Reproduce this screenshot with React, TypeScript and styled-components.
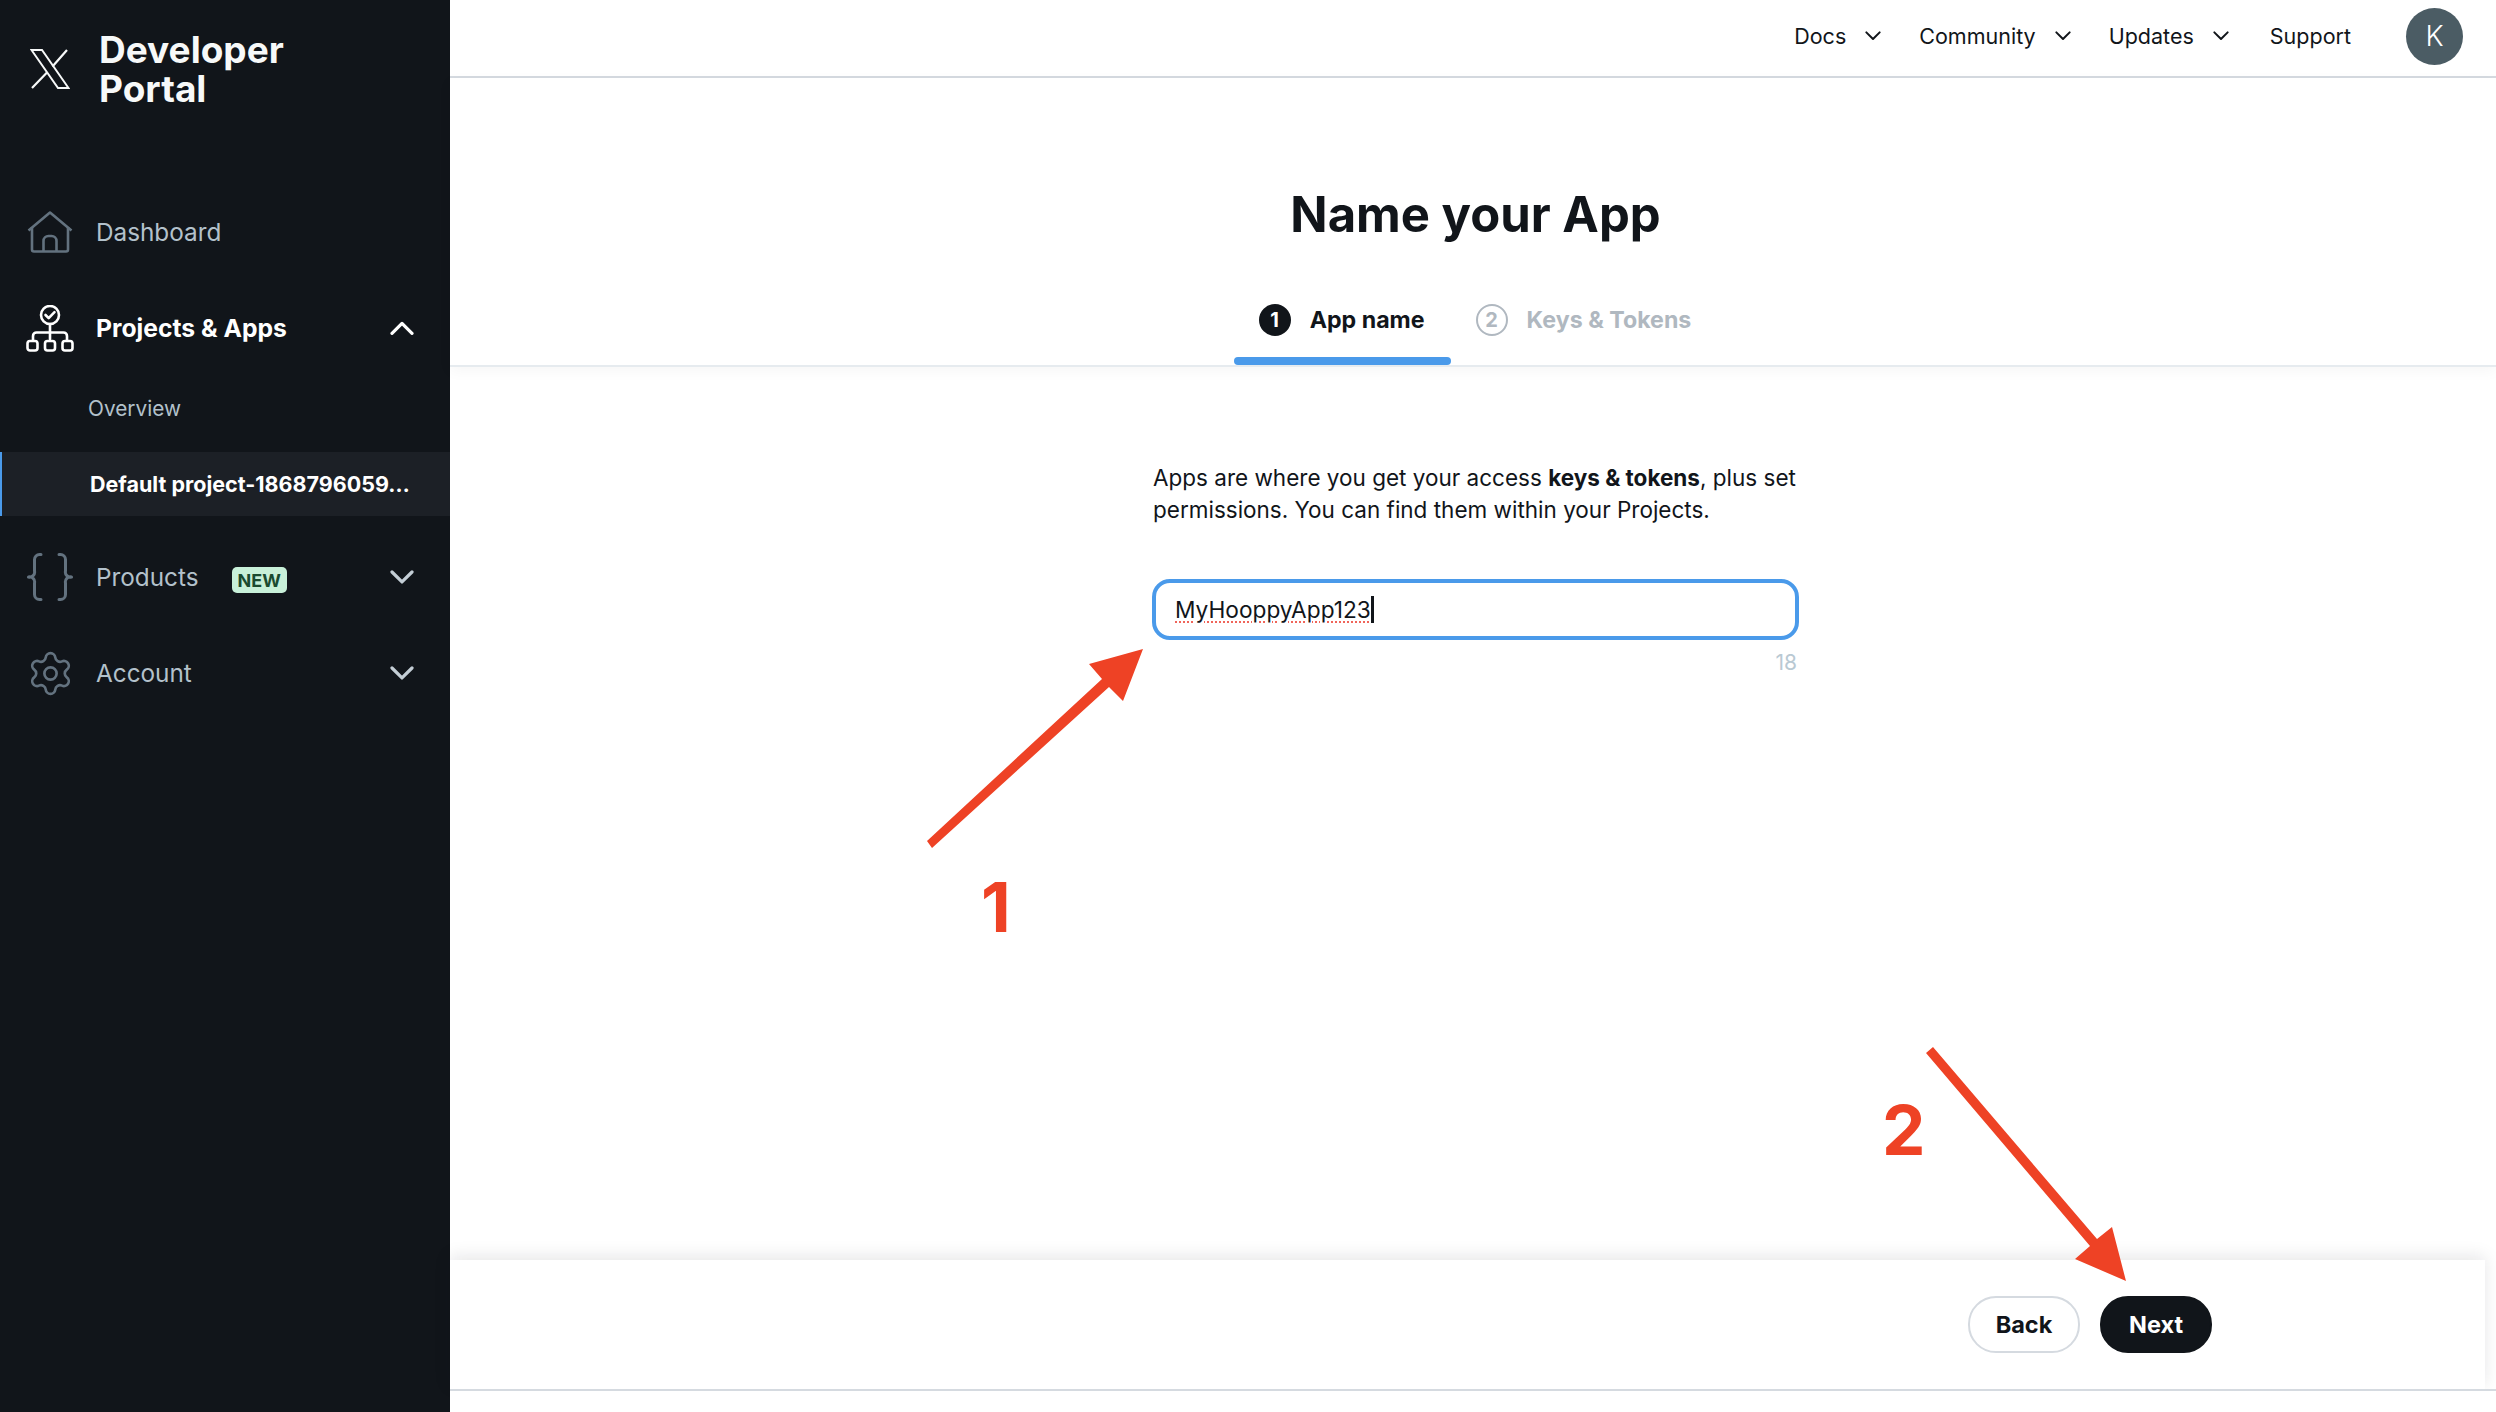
import { Settings } from "lucide-react";
import styled, { createGlobalStyle } from "styled-components";

const GlobalStyle = createGlobalStyle`
  html, body {
    margin: 0;
    padding: 0;
    background: #ffffff;
    overflow: hidden;
  }
  * {
    box-sizing: border-box;
  }
`;

const XLogo = () => (
  <svg width="40" height="40" viewBox="0 0 40 40" fill="none" stroke="#f7f9f9" strokeWidth="2">
    <path d="M1.500 1h10.500l26.500 38H28z" />
    <path d="M37 1L22.500 17.500M17 23.500L2 39" strokeWidth="2.200" />
  </svg>
);

const HomeIcon = () => (
  <svg width="46" height="42" viewBox="0 0 46 42" fill="none" stroke="#63727f" strokeWidth="2.600" strokeLinejoin="round">
    <path d="M1.500 19.500L23 1.500l21.500 18" />
    <path d="M5 16v22.500a2 2 0 0 0 2 2h32a2 2 0 0 0 2-2V16" />
    <path d="M16.500 40.500V30a5 5 0 0 1 5-5h3a5 5 0 0 1 5 5v10.500" />
  </svg>
);

const ProjectsIcon = () => (
  <svg width="48" height="47" viewBox="0 0 48 47" fill="none" stroke="#ffffff" strokeWidth="2.600" strokeLinejoin="round" strokeLinecap="round">
    <circle cx="24" cy="10" r="9" />
    <path d="M19.500 10l3.200 3.200 5.800-6" />
    <path d="M24 19v15" />
    <path d="M7 35v-4a3.500 3.500 0 0 1 3.500-3.500h27A3.500 3.500 0 0 1 41 31v4" />
    <rect x="1.500" y="36" width="10" height="9.500" rx="2.500" />
    <rect x="19" y="36" width="10" height="9.500" rx="2.500" />
    <rect x="36.500" y="36" width="10" height="9.500" rx="2.500" />
  </svg>
);

const BracesIcon = () => (
  <svg width="46" height="48" viewBox="0 0 46 48" fill="none" stroke="#63727f" strokeWidth="3" strokeLinecap="round" strokeLinejoin="round">
    <path d="M14 1.500H12.500a5 5 0 0 0-5 5v11.500a5 5 0 0 1-6 6 5 5 0 0 1 6 6v11.500a5 5 0 0 0 5 5H14" />
    <path d="M32 1.500h1.500a5 5 0 0 1 5 5v11.500a5 5 0 0 0 6 6 5 5 0 0 0-6 6v11.500a5 5 0 0 1-5 5H32" />
  </svg>
);

const Chevron = ({ up, size = 24, weight = 3.2, color = "#c4ced6" }: any) => (
  <svg width={size} height={size * 0.6} viewBox="0 0 24 14.4" fill="none" stroke={color} strokeWidth={weight} strokeLinecap="round" strokeLinejoin="round">
    <path d={up ? "M2 12.400l10-10 10 10" : "M2 2l10 10 10-10"} />
  </svg>
);

const App = () => {
  return (
    <Page>
      <GlobalStyle />
      <Sidebar>
        <Brand>
          <XLogo />
          <BrandName>
            Developer
            <br />
            Portal
          </BrandName>
        </Brand>
        <nav>
          <NavRow>
            <IconSlot>
              <HomeIcon />
            </IconSlot>
            <NavLabel>Dashboard</NavLabel>
          </NavRow>
          <NavRow>
            <IconSlot>
              <ProjectsIcon />
            </IconSlot>
            <NavLabel $active>Projects &amp; Apps</NavLabel>
            <NavChevron>
              <Chevron up color="#ffffff" />
            </NavChevron>
          </NavRow>
          <SubItem>Overview</SubItem>
          <ActiveSubItem>Default project-1868796059…</ActiveSubItem>
          <NavRow>
            <IconSlot>
              <BracesIcon />
            </IconSlot>
            <NavLabel>Products</NavLabel>
            <NewBadge>NEW</NewBadge>
            <NavChevron>
              <Chevron />
            </NavChevron>
          </NavRow>
          <NavRow>
            <IconSlot>
              <Settings size={49} color="#63727f" strokeWidth={1.3} />
            </IconSlot>
            <NavLabel>Account</NavLabel>
            <NavChevron>
              <Chevron />
            </NavChevron>
          </NavRow>
        </nav>
      </Sidebar>

      <Main>
        <TopBar>
          <TopLink>
            Docs
            <Chevron size={16} weight={3} color="#11151a" />
          </TopLink>
          <TopLink>
            Community
            <Chevron size={16} weight={3} color="#11151a" />
          </TopLink>
          <TopLink>
            Updates
            <Chevron size={16} weight={3} color="#11151a" />
          </TopLink>
          <SupportLink>Support</SupportLink>
          <Avatar>K</Avatar>
        </TopBar>

        <StepHeader>
          <Title>Name your App</Title>
          <Steps>
            <Step $active>
              <StepNumber $active>1</StepNumber>
              App name
            </Step>
            <Step>
              <StepNumber>2</StepNumber>
              Keys &amp; Tokens
            </Step>
          </Steps>
        </StepHeader>

        <Body>
          <Form>
            <Intro>
              Apps are where you get your access <strong>keys &amp; tokens</strong>, plus set permissions. You can find
              them within your Projects.
            </Intro>
            <NameField>
              <NameText>MyHooppyApp123</NameText>
              <Caret />
            </NameField>
            <Counter>18</Counter>
          </Form>
        </Body>

        <Footer>
          <BackButton>Back</BackButton>
          <NextButton>Next</NextButton>
        </Footer>
        <BottomStrip />
      </Main>

      <ArrowLayer viewBox="0 0 2496 1412">
        <polygon points="927,841 1102,679 1089,664 1143,649 1123,701 1109,687 932,848" fill="#ee4225" />
        <polygon points="1926,1053 1933,1047 2097,1239 2112,1227 2126,1281 2075,1259 2090,1246" fill="#ee4225" />
      </ArrowLayer>
      <MarkerOne>1</MarkerOne>
      <MarkerTwo>2</MarkerTwo>
    </Page>
  );
};

const Page = styled.div`
  position: relative;
  display: flex;
  width: 100%;
  height: 100vh;
  min-height: 1412px;
  font-family: Inter, "Liberation Sans", sans-serif;
  color: #11151a;
`;

const Sidebar = styled.aside`
  display: flex;
  flex-direction: column;
  width: 450px;
  flex-shrink: 0;
  background: #11151a;
`;

const Brand = styled.div`
  display: flex;
  align-items: center;
  gap: 30px;
  height: 184px;
  padding: 0 0 46px 30px;
`;

const BrandName = styled.div`
  margin-left: -1px;
  font-size: 37px;
  line-height: 39px;
  font-weight: 700;
  color: #f7f9f9;
`;

const NavRow = styled.div`
  display: flex;
  align-items: center;
  height: 96px;
  padding: 0 36px 0 25px;
`;

const IconSlot = styled.div`
  display: flex;
  align-items: center;
  justify-content: center;
  width: 50px;
  margin-right: 21px;
`;

const NavLabel = styled.span<{ $active?: boolean }>`
  font-size: ${(p) => (p.$active ? 24.7 : 24.3)}px;
  font-weight: ${(p) => (p.$active ? 700 : 400)};
  color: ${(p) => (p.$active ? "#ffffff" : "#b3c1cb")};
`;

const NavChevron = styled.div`
  display: flex;
  margin-left: auto;
`;

const SubItem = styled.div`
  display: flex;
  align-items: center;
  height: 64px;
  padding-left: 88px;
  font-size: 20.8px;
  color: #b3c1cb;
`;

const ActiveSubItem = styled.div`
  display: flex;
  align-items: center;
  height: 64px;
  margin: 12px 0 13px;
  padding-left: 88px;
  border-left: 2px solid #4a9aea;
  background: #1c2026;
  font-size: 21.5px;
  font-weight: 700;
  color: #ffffff;
  white-space: nowrap;
`;

const NewBadge = styled.span`
  margin: 6px 0 0 33px;
  padding: 0 6px;
  height: 26px;
  border-radius: 5px;
  background: #c8f0d9;
  color: #1a4a30;
  font-size: 18px;
  line-height: 27px;
  font-weight: 700;
`;

const Main = styled.main`
  display: flex;
  flex-direction: column;
  flex: 1;
  min-width: 0;
`;

const TopBar = styled.header`
  display: flex;
  align-items: center;
  justify-content: flex-end;
  gap: 38px;
  height: 78px;
  padding: 0 33px 4px 0;
  border-bottom: 2px solid #d5dae0;
`;

const TopLink = styled.div`
  display: flex;
  align-items: center;
  gap: 19px;
  font-size: 21.5px;
`;

const SupportLink = styled(TopLink)`
  margin-left: 3px;
`;

const Avatar = styled.div`
  display: flex;
  align-items: center;
  justify-content: center;
  width: 57px;
  height: 57px;
  margin-left: 17px;
  border-radius: 50%;
  background: #4b5c64;
  color: #ffffff;
  font-size: 28px;
  font-weight: 300;
`;

const StepHeader = styled.div`
  display: flex;
  flex-direction: column;
  align-items: center;
  height: 289px;
  padding: 107px 0 0 5px;
  border-bottom: 2px solid #e6ebef;
  box-shadow: 0 4px 14px rgba(15, 20, 25, 0.04);
`;

const Title = styled.h1`
  margin: 0;
  font-size: 49px;
  line-height: 60px;
  font-weight: 700;
`;

const Steps = styled.div`
  display: flex;
  margin-top: 30px;
`;

const Step = styled.div<{ $active?: boolean }>`
  position: relative;
  display: flex;
  align-items: center;
  gap: 19px;
  height: 90px;
  padding: 0 26px 0 25px;
  font-size: 23.2px;
  font-weight: 700;
  color: ${(p) => (p.$active ? "#11151a" : "#b0b8c0")};

  &::after {
    content: "";
    display: ${(p) => (p.$active ? "block" : "none")};
    position: absolute;
    left: 0;
    right: 0;
    bottom: 0;
    height: 8px;
    border-radius: 4px;
    background: #4a9aea;
  }
`;

const StepNumber = styled.span<{ $active?: boolean }>`
  display: flex;
  align-items: center;
  justify-content: center;
  width: 32px;
  height: 32px;
  border-radius: 50%;
  border: 2px solid ${(p) => (p.$active ? "#11151a" : "#b0b8c0")};
  background: ${(p) => (p.$active ? "#11151a" : "transparent")};
  color: ${(p) => (p.$active ? "#ffffff" : "#b0b8c0")};
  font-size: 20px;
`;

const Body = styled.div`
  display: flex;
  justify-content: center;
  flex: 1;
  padding: 95px 0 0 5px;
`;

const Form = styled.div`
  width: 647px;
`;

const Intro = styled.p`
  margin: 0;
  padding-left: 1px;
  font-size: 22.5px;
  line-height: 32px;

  strong {
    font-weight: 700;
  }
`;

const NameField = styled.div`
  display: flex;
  align-items: center;
  height: 61px;
  margin-top: 53px;
  padding-left: 19px;
  border: 4px solid #4a9aea;
  border-radius: 18px;
  font-size: 22.7px;
`;

const NameText = styled.span`
  text-decoration: underline dotted #f0655a 2px;
  text-underline-offset: 3px;
`;

const Caret = styled.span`
  flex-shrink: 0;
  width: 3px;
  height: 27px;
  background: #11151a;
`;

const Counter = styled.div`
  margin-top: 11px;
  padding-right: 2px;
  text-align: right;
  font-size: 21px;
  line-height: 24px;
  color: #b9c9d3;
`;

const Footer = styled.div`
  display: flex;
  align-items: center;
  justify-content: flex-end;
  gap: 20px;
  height: 129px;
  margin-right: 11px;
  padding-right: 273px;
  background: #ffffff;
  box-shadow: 0 -4px 16px rgba(15, 20, 25, 0.1);
`;

const BackButton = styled.button`
  width: 112px;
  height: 57px;
  border: 2px solid #d5dae0;
  border-radius: 28px;
  background: #ffffff;
  color: #11151a;
  font-family: inherit;
  font-size: 23.5px;
  font-weight: 700;
`;

const NextButton = styled(BackButton)`
  border-color: #11151a;
  background: #11151a;
  color: #ffffff;
`;

const BottomStrip = styled.div`
  height: 23px;
  border-top: 2px solid #d5dae0;
  background: #ffffff;
`;

const ArrowLayer = styled.svg`
  position: absolute;
  top: 0;
  left: 0;
  width: 2496px;
  height: 1412px;
  pointer-events: none;
`;

const MarkerOne = styled.div`
  position: absolute;
  top: 872px;
  left: 981px;
  font-size: 69px;
  line-height: 70px;
  font-weight: 700;
  color: #ee4225;
`;

const MarkerTwo = styled(MarkerOne)`
  top: 1095px;
  left: 1882px;
`;

export default App;
